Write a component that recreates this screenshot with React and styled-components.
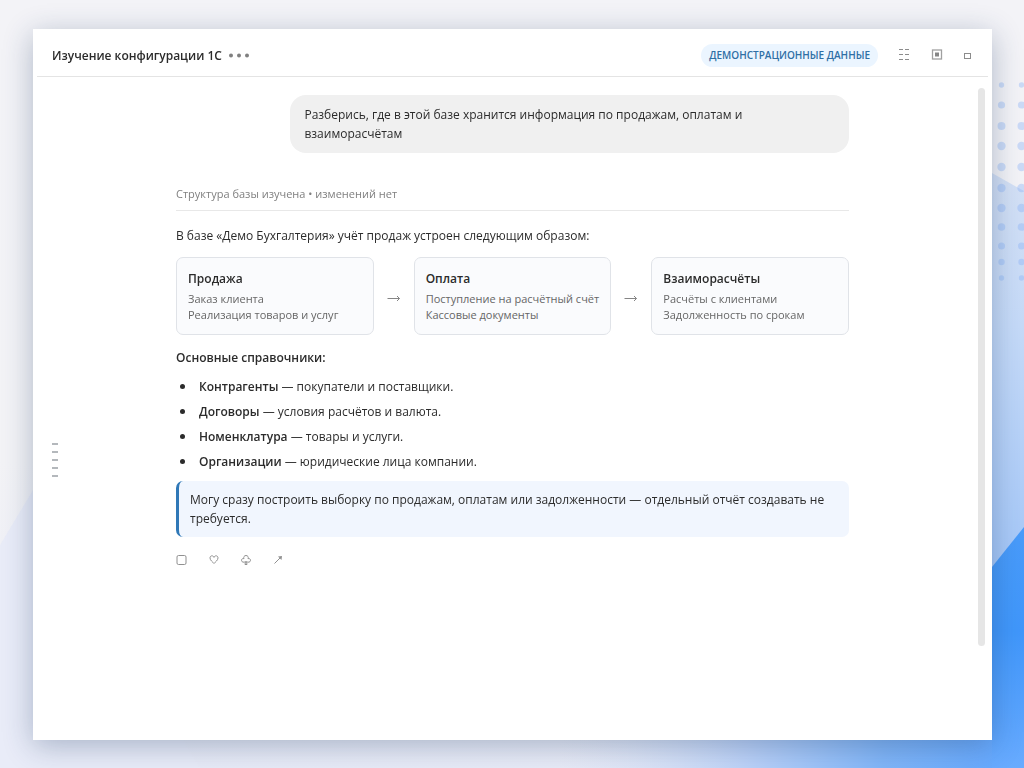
import React from "react";
import styled, { createGlobalStyle } from "styled-components";

const steps = [
  { title: "Продажа", lines: ["Заказ клиента", "Реализация товаров и услуг"] },
  {
    title: "Оплата",
    lines: ["Поступление на расчётный счёт", "Кассовые документы"],
  },
  {
    title: "Взаиморасчёты",
    lines: ["Расчёты с клиентами", "Задолженность по срокам"],
  },
];

const catalogs = [
  { name: "Контрагенты", text: "покупатели и поставщики." },
  { name: "Договоры", text: "условия расчётов и валюта." },
  { name: "Номенклатура", text: "товары и услуги." },
  { name: "Организации", text: "юридические лица компании." },
];

const dotRows = [
  [85, 2.7],
  [105, 3.6],
  [126, 4],
  [146, 4.2],
  [167, 4.2],
  [188, 4.2],
  [208, 4.2],
  [227, 3.8],
  [246, 3.5],
  [262, 3.2],
  [278, 2.7],
];

const Wallpaper = () => (
  <Backdrop viewBox="0 0 1024 768" preserveAspectRatio="none" aria-hidden="true">
    <defs>
      <linearGradient id="base" x1="0" y1="0" x2="0" y2="1">
        <stop offset="0" stopColor="#f3f3f7" />
        <stop offset="0.6" stopColor="#f3f3f6" />
        <stop offset="1" stopColor="#e8ebf7" />
      </linearGradient>
      <linearGradient id="pale" x1="0" y1="170" x2="0" y2="560" gradientUnits="userSpaceOnUse">
        <stop offset="0" stopColor="#d5e1f5" />
        <stop offset="0.4" stopColor="#c5daf8" />
        <stop offset="1" stopColor="#a6c8f8" />
      </linearGradient>
      <linearGradient id="blue" x1="0" y1="520" x2="0" y2="768" gradientUnits="userSpaceOnUse">
        <stop offset="0" stopColor="#4a9cfa" />
        <stop offset="0.45" stopColor="#4097fb" />
        <stop offset="1" stopColor="#68abff" />
      </linearGradient>
      <linearGradient id="floor" x1="560" y1="0" x2="1024" y2="0" gradientUnits="userSpaceOnUse">
        <stop offset="0" stopColor="#d9e2f5" stopOpacity="0" />
        <stop offset="0.4" stopColor="#bcd2f8" />
        <stop offset="0.7" stopColor="#80b5f8" />
        <stop offset="1" stopColor="#60a6ff" />
      </linearGradient>
    </defs>
    <rect width="1024" height="768" fill="url(#base)" />
    <path d="M0 545 L33 490 L200 768 H0Z" fill="#e9ecf8" />
    <path d="M992 173 L1024 191 V768 H992Z" fill="url(#pale)" />
    <rect x="560" y="720" width="464" height="48" fill="url(#floor)" />
    <path d="M992 567 L1024 527 V768 H992Z" fill="url(#blue)" />
    {dotRows.map(([y, r]) => (
      <g key={y} fill="#84b0f6" opacity="0.36">
        <circle cx="1001.5" cy={y} r={r} />
        <circle cx="1021.5" cy={y} r={r} />
      </g>
    ))}
  </Backdrop>
);

const App = () => {
  return (
    <Page>
      <GlobalStyle />
      <Wallpaper />
      <Window>
        <Header>
          <Title>Изучение конфигурации 1С</Title>
          <IconButton aria-label="Ещё" $width={22}>
            <svg width="22" height="16" viewBox="0 0 22 16" fill="#808080">
              <circle cx="3" cy="8.5" r="2" />
              <circle cx="11" cy="8.5" r="2" />
              <circle cx="19" cy="8.5" r="2" />
            </svg>
          </IconButton>
          <Tag>ДЕМОНСТРАЦИОННЫЕ ДАННЫЕ</Tag>
          <HeaderTools>
            <IconButton aria-label="Список">
              <svg width="16" height="16" viewBox="0 0 16 16" stroke="#8c8c8c">
                <path d="M3 2.5h4M9 2.5h4M3 7.5h4M9 7.5h4M3 12.5h4M9 12.5h4" />
              </svg>
            </IconButton>
            <IconButton aria-label="Панель">
              <svg width="16" height="16" viewBox="0 0 16 16" fill="none">
                <rect x="4.500" y="3" width="9" height="9" stroke="#a0a0a0" strokeWidth="1.300" />
                <rect x="7" y="5.500" width="4" height="4" fill="#858585" />
              </svg>
            </IconButton>
            <IconButton aria-label="Развернуть">
              <svg width="16" height="16" viewBox="0 0 16 16" fill="none">
                <rect x="4.5" y="6.5" width="6" height="5" stroke="#8c8c8c" />
              </svg>
            </IconButton>
          </HeaderTools>
        </Header>

        <Body>
          <Outline>
            {[0, 1, 2, 3, 4].map((n) => (
              <OutlineMark key={n} />
            ))}
          </Outline>

          <Thread>
            <Question>
              Разберись, где в этой базе хранится информация по продажам,
              оплатам и взаиморасчётам
            </Question>
            <Status>Структура базы изучена • изменений нет</Status>
            <Paragraph>
              В базе «Демо Бухгалтерия» учёт продаж устроен следующим образом:
            </Paragraph>

            <Flow>
              {steps.map((step, index) => (
                <React.Fragment key={step.title}>
                  {index > 0 && (
                    <Arrow width="14" height="10" viewBox="0 0 14 10">
                      <path d="M0.5 5.5h12M10 3l2.5 2.5L10 8" />
                    </Arrow>
                  )}
                  <Card>
                    <CardTitle>{step.title}</CardTitle>
                    {step.lines.map((line) => (
                      <CardLine key={line}>{line}</CardLine>
                    ))}
                  </Card>
                </React.Fragment>
              ))}
            </Flow>

            <Heading>Основные справочники:</Heading>
            <List>
              {catalogs.map((item) => (
                <Item key={item.name}>
                  <span>
                    <b>{item.name}</b> — {item.text}
                  </span>
                </Item>
              ))}
            </List>

            <Callout>
              Могу сразу построить выборку по продажам, оплатам или
              задолженности — отдельный отчёт создавать не требуется.
            </Callout>

            <Actions>
              <IconButton aria-label="Копировать">
                <ActionIcon>
                  <rect x="3" y="3.5" width="9" height="9" rx="1.5" />
                </ActionIcon>
              </IconButton>
              <IconButton aria-label="Нравится">
                <ActionIcon>
                  <path d="M8 11.5C6.7 9.8 4 8.4 4 5.9 4 3.4 7.2 3 8 5.4 8.8 3 12 3.400 12 5.900 12 8.400 9.300 9.800 8 11.500Z" />
                </ActionIcon>
              </IconButton>
              <IconButton aria-label="Не нравится">
                <ActionIcon>
                  <path d="M7.500 9.500C6 10.800 3.500 10.300 3.500 8.300 3.500 6.900 4.800 6.200 6 6.700 5.200 5 6.300 3.500 8 3.500S10.800 5 10 6.700C11.200 6.200 12.500 6.900 12.500 8.300 12.500 10.300 10 10.800 8.500 9.500L9 12.500H7Z" />
                </ActionIcon>
              </IconButton>
              <IconButton aria-label="Поделиться">
                <ActionIcon>
                  <path d="M4.500 11.500L10.500 5.500" />
                  <path d="M8 4.500L12 4 11.500 8Z" fill="#909090" stroke="none" />
                </ActionIcon>
              </IconButton>
            </Actions>
          </Thread>

          <ScrollRail>
            <ScrollThumb />
          </ScrollRail>
        </Body>
      </Window>
    </Page>
  );
};

const GlobalStyle = createGlobalStyle`
  * {
    box-sizing: border-box;
  }

  body {
    margin: 0;
    color: #2b2b2b;
    font-family: "Open Sans", "Noto Sans", sans-serif;
    font-size: 12px;
    line-height: 19px;
  }
`;

const Page = styled.div`
  display: flex;
  min-height: 100vh;
  padding: 29px 32px 28px 33px;
`;

const Backdrop = styled.svg`
  position: fixed;
  inset: 0;
  z-index: -1;
  width: 100%;
  height: 100%;
`;

const Window = styled.main`
  display: flex;
  flex: 1;
  flex-direction: column;
  min-width: 0;
  background: #fff;
  box-shadow: 0 6px 28px rgba(30, 60, 100, 0.32);
`;

const Header = styled.header`
  display: flex;
  align-items: center;
  height: 48px;
  margin: 0 4px;
  padding: 5px 12px 0 15px;
  border-bottom: 1px solid #e4e4e4;
`;

const Title = styled.h1`
  margin: 0 6px 0 0;
  font-size: 12px;
  font-weight: 600;
`;

const IconButton = styled.button`
  display: flex;
  align-items: center;
  justify-content: center;
  width: ${(props) => props.$width || 16}px;
  height: 16px;
  padding: 0;
  border: 0;
  background: none;
  cursor: pointer;
`;

const Tag = styled.span`
  margin-left: auto;
  padding: 2px 8px;
  border-radius: 12px;
  background: #ebf5ff;
  color: #2f6fa5;
  font-size: 10px;
  font-weight: 600;
`;

const HeaderTools = styled.div`
  display: flex;
  gap: 16px;
  margin-left: 18px;
`;

const Body = styled.div`
  display: flex;
  flex: 1;
  justify-content: space-between;
`;

const Outline = styled.nav`
  display: flex;
  flex-direction: column;
  justify-content: center;
  gap: 6px;
  width: 32px;
  padding: 102px 7px 0 19px;
`;

const OutlineMark = styled.span`
  height: 2px;
  background: #b4b8bc;
`;

const Thread = styled.article`
  flex: 0 1 673px;
  min-width: 0;
  padding: 18px 0;
`;

const Question = styled.p`
  width: 83%;
  margin: 0 0 31px auto;
  padding: 10px 14px;
  border-radius: 16px;
  background: #f0f0f0;
`;

const Status = styled.p`
  margin: 0 0 15px;
  padding-bottom: 7px;
  border-bottom: 1px solid #e8e8e8;
  color: #808080;
  font-size: 11px;
`;

const Paragraph = styled.p`
  margin: 0 0 12px;
`;

const Flow = styled.div`
  display: flex;
  align-items: center;
  justify-content: space-between;
`;

const Arrow = styled.svg`
  margin: 4px 13px 0;
  fill: none;
  stroke: #858585;
`;

const Card = styled.section`
  flex: 1;
  min-width: 0;
  padding: 11px;
  border: 1px solid #e0e3e8;
  border-radius: 7px;
  background: #fafbfd;
`;

const CardTitle = styled.h2`
  margin: 0 0 3px;
  font-size: 12px;
  font-weight: 600;
`;

const CardLine = styled.p`
  margin: 0;
  color: #666;
  font-size: 11px;
  line-height: 16px;
`;

const Heading = styled.h2`
  margin: 13px 0 10px;
  font-size: 12px;
  font-weight: 600;
`;

const List = styled.ul`
  display: grid;
  gap: 6px;
  margin: 0 0 10px;
  padding: 0 0 0 4px;
  list-style: none;

  b {
    font-weight: 600;
  }
`;

const Item = styled.li`
  display: flex;
  align-items: center;
  gap: 14px;

  &::before {
    content: "";
    width: 5px;
    height: 5px;
    border-radius: 50%;
    background: #2b2b2b;
  }
`;

const Callout = styled.p`
  margin: 0 0 15px;
  padding: 9px 11px;
  border-left: 3px solid #2f78b7;
  border-radius: 7px;
  background: #f1f6fe;
`;

const Actions = styled.div`
  display: flex;
  gap: 16px;
`;

const ActionIcon = styled.svg.attrs({
  width: 16,
  height: 16,
  viewBox: "2 0 16 16",
})`
  fill: none;
  stroke: #909090;
`;

const ScrollRail = styled.div`
  width: 32px;
  padding: 11px 7px 94px 18px;
`;

const ScrollThumb = styled.div`
  height: 100%;
  border-radius: 4px;
  background: #e6e6e6;
`;

export default App;
